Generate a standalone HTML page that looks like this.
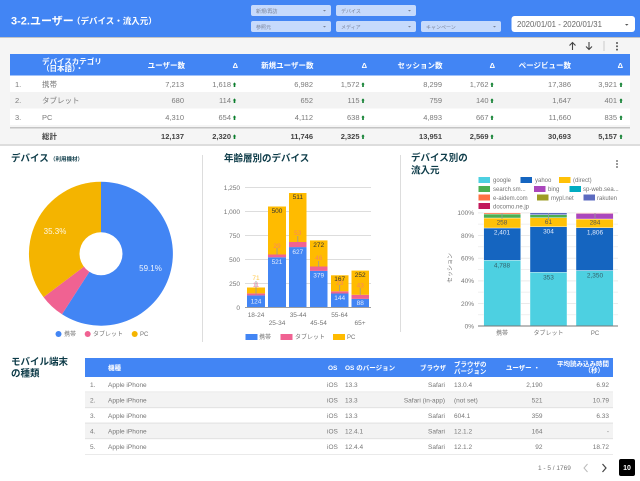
<!DOCTYPE html>
<html lang="ja"><head><meta charset="utf-8"><title>3-2.ユーザー</title>
<style>
html,body{margin:0;padding:0;background:#fff;overflow:hidden}
svg{display:block;font-family:"Liberation Sans","Noto Sans CJK JP",sans-serif;filter:blur(.35px)}
.h{fill:#fff;font-weight:700;font-size:7.5px}
.c{fill:#7a7a7a;font-size:7.5px}
.b{fill:#444;font-size:7.5px;font-weight:700}
.e{text-anchor:end}.m{text-anchor:middle}
.t{fill:#0d3b48;font-weight:700;font-size:9.5px}
.f{fill:#78839a;font-size:5px}
.l{fill:#757575;font-size:6px}
.a{fill:#757575;font-size:6.5px}
.d{fill:#777;font-size:6.5px}
.n{font-size:6.5px;text-anchor:middle}
</style></head><body>
<svg width="640" height="481" viewBox="0 0 640 481" xmlns="http://www.w3.org/2000/svg">
<defs><path id="u" d="M0-4.6L1.7-2.6H.8V0H-.8V-2.6H-1.7Z" fill="#0a7d2c"/></defs>
<rect width="640" height="481" fill="#fff"/>
<rect y="38" width="640" height="107" fill="#f5f5f5"/>
<rect y="145" width="640" height="1" fill="#ddd"/>
<rect width="640" height="37" fill="#4285f4"/>
<rect y="37" width="640" height="1" fill="#c4c4c4"/>
<text x="11" y="24.5" fill="#fff" font-size="11px" font-weight="700">3-2.ユーザー</text>
<text x="72" y="24" fill="#fff" font-size="8.5px" font-weight="700">（デバイス・流入元）</text>

<g fill="#c6dafc">
<rect x="251" y="5" width="80" height="11" rx="2"/><rect x="336" y="5" width="80" height="11" rx="2"/>
<rect x="251" y="21" width="80" height="11" rx="2"/><rect x="336" y="21" width="80" height="11" rx="2"/><rect x="421" y="21" width="80" height="11" rx="2"/>
</g>
<text x="256" y="13" class="f">新規/再訪</text><text x="341" y="13" class="f">デバイス</text>
<text x="256" y="29" class="f">参照元</text><text x="341" y="29" class="f">メディア</text><text x="426" y="29" class="f">キャンペーン</text>
<g fill="#78839a"><path d="M323 10h3l-1.500 1.500zM408 10h3l-1.500 1.500zM323 26h3l-1.500 1.500zM408 26h3l-1.500 1.500zM493 26h3l-1.500 1.500z"/></g>
<rect x="511.500" y="16" width="123.500" height="16" rx="3" fill="#fff"/>
<text x="517" y="27" fill="#666" font-size="7.800px">2020/01/01 - 2020/01/31</text>
<path d="M625 24h3.500l-1.750 1.750z" fill="#555"/>

<g fill="none" stroke="#444" stroke-width="1.100"><path d="M572.500 50V42.500M569.500 45.500l3-3 3 3M589 42v7.500M586 46.500l3 3 3-3"/></g>
<rect x="603.500" y="41" width="1" height="10" fill="#ccc"/>
<g fill="#555"><circle cx="617" cy="43" r="1"/><circle cx="617" cy="46.300" r="1"/><circle cx="617" cy="49.600" r="1"/></g>

<rect x="10" y="54" width="620" height="21.500" fill="#4285f4"/>
<rect x="10" y="75.500" width="620" height="16.500" fill="#fff"/>
<rect x="10" y="92" width="620" height="16.500" fill="#f3f3f3"/>
<rect x="10" y="108.500" width="620" height="16.500" fill="#fff"/>
<rect x="10" y="127" width="620" height="1.500" fill="#c4c4c4"/>
<rect x="0" y="144" width="640" height="1" fill="#ddd"/>

<text x="42" y="64" class="h">デバイスカテゴリ</text><text x="42" y="71" class="h">（日本語）・</text>
<g class="h e" text-anchor="end">
<text x="185" y="68" text-anchor="end">ユーザー数</text><text x="238" y="68" text-anchor="end">Δ</text>
<text x="313.500" y="68" text-anchor="end">新規ユーザー数</text><text x="367" y="68" text-anchor="end">Δ</text>
<text x="442.500" y="68" text-anchor="end">セッション数</text><text x="495" y="68" text-anchor="end">Δ</text>
<text x="571" y="68" text-anchor="end">ページビュー数</text><text x="623" y="68" text-anchor="end">Δ</text>
</g>

<g class="c">
<text x="15" y="87">1.</text><text x="42" y="87">携帯</text>
<text x="15" y="103">2.</text><text x="42" y="103">タブレット</text>
<text x="15" y="120">3.</text><text x="42" y="120">PC</text>
<g text-anchor="end">
<text x="184" y="87">7,213</text><text x="231" y="87">1,618</text><text x="313" y="87">6,982</text><text x="359.500" y="87">1,572</text><text x="442" y="87">8,299</text><text x="488.500" y="87">1,762</text><text x="571" y="87">17,386</text><text x="617" y="87">3,921</text>
<text x="184" y="103">680</text><text x="231" y="103">114</text><text x="313" y="103">652</text><text x="359.500" y="103">115</text><text x="442" y="103">759</text><text x="488.500" y="103">140</text><text x="571" y="103">1,647</text><text x="617" y="103">401</text>
<text x="184" y="120">4,310</text><text x="231" y="120">654</text><text x="313" y="120">4,112</text><text x="359.500" y="120">638</text><text x="442" y="120">4,893</text><text x="488.500" y="120">667</text><text x="571" y="120">11,660</text><text x="617" y="120">835</text>
</g></g>
<g class="b">
<text x="42" y="139">総計</text>
<g text-anchor="end"><text x="184" y="139">12,137</text><text x="231" y="139">2,320</text><text x="313" y="139">11,746</text><text x="359.500" y="139">2,325</text><text x="442" y="139">13,951</text><text x="488.500" y="139">2,569</text><text x="571" y="139">30,693</text><text x="617" y="139">5,157</text></g>
</g>
<use href="#u" x="234.500" y="87"/><use href="#u" x="363" y="87"/><use href="#u" x="492" y="87"/><use href="#u" x="621" y="87"/>
<use href="#u" x="234.500" y="103"/><use href="#u" x="363" y="103"/><use href="#u" x="492" y="103"/><use href="#u" x="621" y="103"/>
<use href="#u" x="234.500" y="120"/><use href="#u" x="363" y="120"/><use href="#u" x="492" y="120"/><use href="#u" x="621" y="120"/>
<use href="#u" x="234.500" y="139"/><use href="#u" x="363" y="139"/><use href="#u" x="492" y="139"/><use href="#u" x="621" y="139"/>

<text x="11" y="161.500" class="t">デバイス</text><text x="50" y="161" fill="#0d3b48" font-size="5.500px" font-weight="700">（利用機材）</text>
<text x="224" y="161.500" class="t">年齢層別のデバイス</text>
<text x="411" y="161" class="t">デバイス別の</text><text x="411" y="173.500" class="t">流入元</text>
<text x="11" y="365" class="t">モバイル端末</text><text x="11" y="376.500" class="t">の種類</text>
<rect x="202" y="155" width="1" height="187" fill="#ddd"/>
<rect x="400" y="155" width="1" height="177" fill="#ddd"/>

<path d="M101 253.700V181.700A72 72 0 1 1 62 314.300Z" fill="#4285f4"/>
<path d="M101 253.700L62 314.300A72 72 0 0 1 43.500 297.100Z" fill="#f06292"/>
<path d="M101 253.700L43.500 297.100A72 72 0 0 1 101 181.700Z" fill="#f4b400"/>
<circle cx="101" cy="253.700" r="21.500" fill="#fff"/>
<text x="150.500" y="271" fill="#fff" font-size="8px" text-anchor="middle" opacity=".9">59.1%</text>
<text x="55" y="234" fill="#fff" font-size="8px" text-anchor="middle" opacity=".9">35.3%</text>
<circle cx="58.500" cy="334" r="3" fill="#4285f4"/><circle cx="87.700" cy="334" r="3" fill="#f06292"/><circle cx="134.700" cy="334" r="3" fill="#f4b400"/>
<text x="64" y="336" class="l">携帯</text><text x="93" y="336" class="l">タブレット</text><text x="140" y="336" class="l">PC</text>

<g fill="#ddd"><rect x="245" y="187" width="126" height="1"/><rect x="245" y="211" width="126" height="1"/><rect x="245" y="235" width="126" height="1"/><rect x="245" y="259" width="126" height="1"/><rect x="245" y="283" width="126" height="1"/></g>
<g text-anchor="end" class="a">
<text x="240" y="190">1,250</text><text x="240" y="214">1,000</text><text x="240" y="238">750</text><text x="240" y="262">500</text><text x="240" y="286">250</text><text x="240" y="310">0</text>
</g>
<g fill="#4285f4">
<rect x="247" y="295.400" width="18" height="11.900"/><rect x="268" y="257.300" width="18" height="50"/><rect x="289" y="247.100" width="17.500" height="60.200"/><rect x="310" y="270.900" width="17.500" height="36.400"/><rect x="331" y="293.500" width="17.500" height="13.800"/><rect x="351.500" y="298.900" width="17.500" height="8.400"/>
</g>
<g fill="#f06292">
<rect x="247" y="293.400" width="18" height="2"/><rect x="268" y="254.500" width="18" height="2.800"/><rect x="289" y="242" width="17.500" height="5.100"/><rect x="310" y="266.500" width="17.500" height="4.400"/><rect x="331" y="291.300" width="17.500" height="2.200"/><rect x="351.500" y="294.800" width="17.500" height="4.100"/>
</g>
<g fill="#ffbb00">
<rect x="247" y="287.500" width="18" height="5.900"/><rect x="268" y="206.500" width="18" height="48"/><rect x="289" y="193" width="17.500" height="49"/><rect x="310" y="240.400" width="17.500" height="26.100"/><rect x="331" y="275.300" width="17.500" height="16"/><rect x="351.500" y="270.600" width="17.500" height="24.200"/>
</g>
<g stroke="#999" stroke-width=".8"><path d="M256 281v14M277 248v7M297.800 236v6M318.700 261v6M339.700 285v6M360.200 288v7"/></g>
<g class="n">
<text x="256" y="280" fill="#ffc94d">71</text><text x="256" y="287" fill="#f48fb1">11</text><text x="256" y="303.500" fill="#e3ecfd">124</text>
<text x="277" y="213" fill="#333">500</text><text x="277" y="248" fill="#f9855f">29</text><text x="277" y="264" fill="#e3ecfd">521</text>
<text x="297.800" y="199" fill="#333">511</text><text x="297.800" y="235" fill="#f9855f">53</text><text x="297.800" y="254" fill="#e3ecfd">627</text>
<text x="318.700" y="247" fill="#333">272</text><text x="318.700" y="260" fill="#f9855f">46</text><text x="318.700" y="277.500" fill="#e3ecfd">379</text>
<text x="339.700" y="281" fill="#333">167</text><text x="339.700" y="285" fill="#f9855f">23</text><text x="339.700" y="300" fill="#e3ecfd">144</text>
<text x="360.200" y="277" fill="#333">252</text><text x="360.200" y="287.500" fill="#f9855f">43</text><text x="360.200" y="305" fill="#e3ecfd">88</text>
</g>
<rect x="245" y="307" width="126" height=".8" fill="#888"/>
<g class="a m" text-anchor="middle">
<text x="256" y="317" text-anchor="middle">18-24</text><text x="277" y="325" text-anchor="middle">25-34</text><text x="298" y="317" text-anchor="middle">35-44</text><text x="318.500" y="325" text-anchor="middle">45-54</text><text x="339.500" y="317" text-anchor="middle">55-64</text><text x="360" y="325" text-anchor="middle">65+</text>
</g>
<rect x="245.500" y="334" width="12" height="6" fill="#4285f4"/><rect x="280.500" y="334" width="12" height="6" fill="#f06292"/><rect x="333" y="334" width="12" height="6" fill="#ffbb00"/>
<text x="259" y="339" class="l">携帯</text><text x="295" y="339" class="l">タブレット</text><text x="347" y="339" class="l">PC</text>

<g fill="#555"><circle cx="617" cy="161" r=".9"/><circle cx="617" cy="164" r=".9"/><circle cx="617" cy="167" r=".9"/></g>
<rect x="478.500" y="177" width="11.500" height="6" fill="#4dd0e1"/><rect x="520.500" y="177" width="11.500" height="6" fill="#1565c0"/><rect x="559" y="177" width="11.500" height="6" fill="#ffc107"/>
<rect x="478.500" y="186" width="11.500" height="6" fill="#4caf50"/><rect x="534" y="186" width="11.500" height="6" fill="#ab47bc"/><rect x="569.500" y="186" width="11.500" height="6" fill="#00acc1"/>
<rect x="478.500" y="194.500" width="11.500" height="6" fill="#ff7043"/><rect x="537" y="194.500" width="11.500" height="6" fill="#9e9d24"/><rect x="583.500" y="194.500" width="11.500" height="6" fill="#5c6bc0"/>
<rect x="478.500" y="203" width="11.500" height="6" fill="#c2185b"/>
<g class="l">
<text x="493" y="182">google</text><text x="535" y="182">yahoo</text><text x="573" y="182">(direct)</text>
<text x="493" y="191">search.sm...</text><text x="548" y="191">bing</text><text x="583" y="191">sp-web.sea...</text>
<text x="493" y="200">e-aidem.com</text><text x="551" y="200">mypl.net</text><text x="597" y="200">rakuten</text>
<text x="493" y="208.500">docomo.ne.jp</text>
</g>
<g fill="#e4e4e4"><rect x="478" y="212.500" width="140" height=".8"/><rect x="478" y="223.800" width="140" height=".6"/><rect x="478" y="235.200" width="140" height=".8"/><rect x="478" y="246.500" width="140" height=".6"/><rect x="478" y="257.800" width="140" height=".8"/><rect x="478" y="269.200" width="140" height=".6"/><rect x="478" y="280.500" width="140" height=".8"/><rect x="478" y="291.800" width="140" height=".6"/><rect x="478" y="303.200" width="140" height=".8"/><rect x="478" y="314.500" width="140" height=".6"/></g>
<g class="a" text-anchor="end">
<text x="474" y="215">100%</text><text x="474" y="238">80%</text><text x="474" y="260.500">60%</text><text x="474" y="283">40%</text><text x="474" y="306">20%</text><text x="474" y="328.500">0%</text>
</g>
<text transform="translate(452 268) rotate(-90)" class="l" text-anchor="middle">セッション</text>
<g stroke="#fff" stroke-width=".4">
<rect x="483.700" y="260.300" width="37" height="65.700" fill="#4dd0e1"/><rect x="483.700" y="228" width="37" height="32.300" fill="#1565c0"/><rect x="483.700" y="218" width="37" height="10" fill="#ffc107"/><rect x="483.700" y="214" width="37" height="4" fill="#4caf50"/><rect x="483.700" y="212.700" width="37" height="1.300" fill="#ff7043"/>
<rect x="530" y="272.300" width="37" height="53.700" fill="#4dd0e1"/><rect x="530" y="226.700" width="37" height="45.600" fill="#1565c0"/><rect x="530" y="217.700" width="37" height="9" fill="#ffc107"/><rect x="530" y="214.700" width="37" height="3" fill="#4caf50"/><rect x="530" y="212.700" width="37" height="2" fill="#5c6bc0"/>
<rect x="576" y="270.500" width="37.300" height="55.500" fill="#4dd0e1"/><rect x="576" y="227.700" width="37.300" height="42.800" fill="#1565c0"/><rect x="576" y="219" width="37.300" height="8.700" fill="#ffc107"/><rect x="576" y="213.400" width="37.300" height="5.600" fill="#ab47bc"/><rect x="576" y="212.700" width="37.300" height=".7" fill="#ff7043"/>
</g>
<g stroke="#999" stroke-width=".8"><path d="M502 213v6M548.500 213v7M595 213v6"/></g>
<g class="n">
<text x="502" y="224.500" fill="#555">258</text><text x="548.500" y="224" fill="#555">61</text><text x="595" y="224.500" fill="#555">284</text>
<text x="502" y="234.500" fill="#e3ecfd">2,401</text><text x="548.500" y="233.500" fill="#e3ecfd">304</text><text x="595" y="234.500" fill="#e3ecfd">1,806</text>
<text x="502" y="267.500" fill="#35616b">4,788</text><text x="548.500" y="279.500" fill="#35616b">353</text><text x="595" y="277.500" fill="#35616b">2,350</text>
</g>
<rect x="478" y="325.500" width="140" height="1" fill="#777"/>
<g class="l" text-anchor="middle"><text x="502" y="335">携帯</text><text x="548.500" y="335">タブレット</text><text x="595" y="335">PC</text></g>

<rect x="85" y="358" width="528" height="19" fill="#4285f4"/>
<rect x="85" y="392" width="528" height="15" fill="#f3f3f3"/><rect x="85" y="423" width="528" height="15" fill="#f3f3f3"/>
<g fill="#e4e4e4"><rect x="85" y="391.500" width="528" height=".7"/><rect x="85" y="407" width="528" height="1.200"/><rect x="85" y="422.500" width="528" height="1.200"/><rect x="85" y="438" width="528" height="1.200"/><rect x="85" y="454" width="528" height=".8"/></g>
<g fill="#fff" font-size="6.500px" font-weight="700">
<text x="108" y="370">機種</text><text x="328" y="370">OS</text><text x="345" y="370">OS のバージョン</text><text x="446" y="370" text-anchor="end">ブラウザ</text>
<text x="454" y="366.500">ブラウザの</text><text x="454" y="373.500">バージョン</text><text x="540" y="370" text-anchor="end">ユーザー ・</text>
<text x="609" y="366" text-anchor="end">平均読み込み時間</text><text x="604" y="372.500" text-anchor="end">（秒）</text>
</g>
<g class="d">
<text x="90" y="387">1.</text><text x="108" y="387">Apple iPhone</text><text x="327" y="387">iOS</text><text x="345" y="387">13.3</text><text x="445" y="387" text-anchor="end">Safari</text><text x="454" y="387">13.0.4</text><text x="542.500" y="387" text-anchor="end">2,190</text><text x="609" y="387" text-anchor="end">6.92</text>
<text x="90" y="402.500">2.</text><text x="108" y="402.500">Apple iPhone</text><text x="327" y="402.500">iOS</text><text x="345" y="402.500">13.3</text><text x="445" y="402.500" text-anchor="end">Safari (in-app)</text><text x="454" y="402.500">(not set)</text><text x="542.500" y="402.500" text-anchor="end">521</text><text x="609" y="402.500" text-anchor="end">10.79</text>
<text x="90" y="418">3.</text><text x="108" y="418">Apple iPhone</text><text x="327" y="418">iOS</text><text x="345" y="418">13.3</text><text x="445" y="418" text-anchor="end">Safari</text><text x="454" y="418">604.1</text><text x="542.500" y="418" text-anchor="end">359</text><text x="609" y="418" text-anchor="end">6.33</text>
<text x="90" y="433.500">4.</text><text x="108" y="433.500">Apple iPhone</text><text x="327" y="433.500">iOS</text><text x="345" y="433.500">12.4.1</text><text x="445" y="433.500" text-anchor="end">Safari</text><text x="454" y="433.500">12.1.2</text><text x="542.500" y="433.500" text-anchor="end">164</text><text x="609" y="433.500" text-anchor="end">-</text>
<text x="90" y="449">5.</text><text x="108" y="449">Apple iPhone</text><text x="327" y="449">iOS</text><text x="345" y="449">12.4.4</text><text x="445" y="449" text-anchor="end">Safari</text><text x="454" y="449">12.1.2</text><text x="542.500" y="449" text-anchor="end">92</text><text x="609" y="449" text-anchor="end">18.72</text>
</g>
<text x="538" y="470" class="d">1 - 5 / 1769</text>
<path d="M587.500 464L584 468l3.500 4" fill="none" stroke="#bbb" stroke-width="1"/>
<path d="M602.500 464L606 468l-3.500 4" fill="none" stroke="#444" stroke-width="1.200"/>
<rect x="619" y="459" width="16" height="17" rx="2" fill="#000"/>
<text x="627" y="470" fill="#fff" font-size="7px" font-weight="700" text-anchor="middle">10</text>
</svg>
</body></html>
